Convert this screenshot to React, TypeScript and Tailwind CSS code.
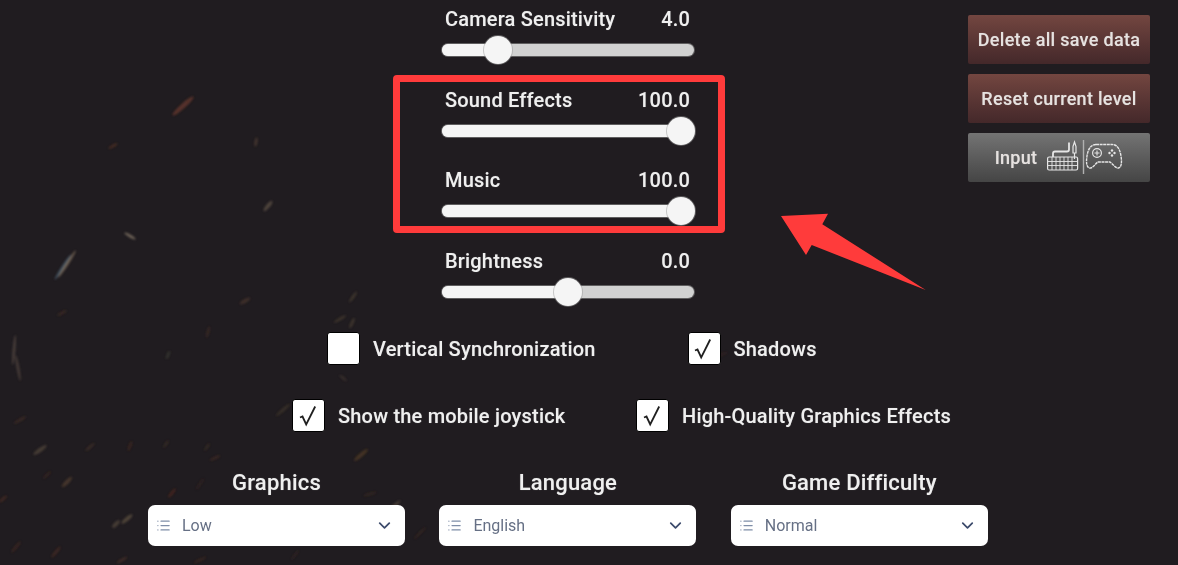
import { ChevronDown, List } from "lucide-react";

// streaks in the backdrop: x, y, length, thickness, angle, colour, opacity
const sparks: [number, number, number, number, number, string, number][] = [
  [183, 106, 28, 5, -42, "#7a4030", 0.6],
  [63, 267, 30, 3, -57, "#5a7a90", 0.55],
  [67, 264, 32, 3, -57, "#a08a70", 0.55],
  [130, 236, 13, 3, 30, "#a59580", 0.55],
  [268, 206, 13, 4, -50, "#7a6a58", 0.5],
  [256, 142, 9, 3, -80, "#6a5040", 0.45],
  [113, 146, 10, 3, -30, "#6a3a28", 0.45],
  [245, 301, 12, 4, -30, "#6a4a38", 0.4],
  [62, 313, 10, 3, -30, "#5a3a28", 0.4],
  [14, 350, 30, 3, -85, "#6a5a50", 0.5],
  [18, 368, 26, 3, 80, "#6a5a50", 0.45],
  [20, 420, 14, 3, -30, "#5a3a2a", 0.4],
  [40, 450, 16, 4, -35, "#6a5a48", 0.5],
  [90, 447, 12, 3, -40, "#5a4030", 0.4],
  [130, 446, 10, 3, -70, "#5a3020", 0.4],
  [67, 482, 14, 4, -45, "#6a5038", 0.5],
  [47, 475, 10, 3, -45, "#4a3020", 0.4],
  [127, 519, 14, 4, -40, "#7a6a50", 0.5],
  [116, 524, 10, 4, -45, "#6a5a48", 0.5],
  [56, 552, 14, 3, -50, "#6a3a28", 0.4],
  [16, 547, 14, 3, -50, "#5a3020", 0.4],
  [122, 560, 12, 3, -30, "#6a4030", 0.4],
  [3, 499, 10, 3, -40, "#6a3a28", 0.4],
  [353, 297, 13, 3, -55, "#6a5a40", 0.4],
  [340, 319, 14, 3, -30, "#6a5a40", 0.35],
  [352, 323, 11, 3, -65, "#6a5a40", 0.4],
  [208, 332, 12, 3, -75, "#5a3a2a", 0.35],
  [168, 355, 9, 3, -70, "#4a5040", 0.4],
  [343, 378, 9, 3, 40, "#5a4a3a", 0.35],
  [283, 410, 18, 3, -40, "#5a4a34", 0.4],
  [361, 455, 18, 4, -40, "#6a4a2a", 0.5],
  [166, 444, 9, 3, -55, "#4a3a2a", 0.4],
  [207, 447, 9, 3, -55, "#4a3a2a", 0.4],
  [215, 458, 11, 3, -25, "#5a3a28", 0.4],
  [172, 493, 11, 3, -50, "#6a2e20", 0.45],
  [200, 484, 14, 3, -55, "#4a3020", 0.3],
  [370, 494, 14, 3, -15, "#4a3020", 0.35],
  [395, 505, 14, 3, -40, "#7a6a50", 0.4],
  [420, 533, 16, 3, -45, "#4a3020", 0.35],
  [200, 560, 14, 3, -25, "#5a3020", 0.35],
  [295, 555, 12, 3, -55, "#4a3020", 0.3],
  [720, 355, 16, 3, -20, "#4a2c20", 0.35],
];

function Backdrop() {
  return (
    <svg className="absolute inset-0 pointer-events-none" width="1178" height="565" viewBox="0 0 1178 565">
      <defs>
        <filter id="soft" x="-50%" y="-50%" width="200%" height="200%">
          <feGaussianBlur stdDeviation="0.8" />
        </filter>
      </defs>
      <g filter="url(#soft)">
        {sparks.map(([x, y, l, t, a, c, o], i) => (
          <ellipse key={i} cx={x} cy={y} rx={l / 2} ry={t / 2} fill={c} opacity={o} transform={`rotate(${a} ${x} ${y})`} />
        ))}
      </g>
    </svg>
  );
}

function Slider({ label, value, pos }: { label: string; value: string; pos: number }) {
  return (
    <div className="w-[252px] h-[80.67px] shrink-0">
      <div className="flex justify-between pl-[3px] pr-[4px] h-[26px] text-[20px] leading-[26px] font-medium tracking-[0.18px] text-[#efefef]">
        <span>{label}</span>
        <span>{value}</span>
      </div>
      <div className="relative mt-[12px] h-[12px] rounded-full bg-[#d1d1d1] ring-1 ring-[#8a8a8a]/60">
        <div className="h-full rounded-full bg-[#f5f5f5]" style={{ width: pos }} />
        <div
          className="absolute top-[-8px] w-[28px] h-[28px] rounded-full bg-[#f5f5f5] ring-1 ring-[#9a9a9a]/50"
          style={{ left: pos - 14 }}
        />
      </div>
    </div>
  );
}

function Check({ label, checked, width }: { label: string; checked: boolean; width: number }) {
  return (
    <div className="flex items-center gap-[13px]" style={{ width }}>
      <div className="w-[33px] h-[33px] shrink-0 rounded-[3px] bg-white border border-black flex items-center justify-center">
        {checked && (
          <svg width="22" height="24" viewBox="0 0 22 24" fill="none">
            <path d="M2 13.5 L4.5 12.5 L8.2 20.5 L17.2 2.5" stroke="#1f1f1f" strokeWidth="1.8" />
          </svg>
        )}
      </div>
      <span className="text-[20px] font-medium tracking-[0.2px] text-[#efefef] whitespace-nowrap">{label}</span>
    </div>
  );
}

function Dropdown({ title, value }: { title: string; value: string }) {
  return (
    <div className="w-[257px]">
      <div className="h-[33px] text-center text-[22px] leading-[33px] font-medium tracking-[0.2px] text-[#efefef]">{title}</div>
      <div className="mt-[6px] h-[41px] rounded-[7px] bg-white flex items-center pl-[8px] pr-[11px]">
        <List size={15} strokeWidth={2} className="text-[#7f8ea8]" />
        <span className="ml-[11px] text-[16px] text-[#667085] [text-shadow:none]">{value}</span>
        <ChevronDown size={19} strokeWidth={2.2} className="ml-auto text-[#3b4a6b]" />
      </div>
    </div>
  );
}

function ActionButton({ children, grey }: { children: React.ReactNode; grey?: boolean }) {
  return (
    <div
      className={`w-[182px] h-[49px] flex items-center justify-center text-[18px] font-medium tracking-[0.3px] text-[#e6e2e0] rounded-[2px] blur-[0.5px] ${
        grey ? "bg-gradient-to-b from-[#747474] to-[#454545]" : "bg-gradient-to-b from-[#734640] to-[#44282a]"
      }`}
    >
      {children}
    </div>
  );
}

function InputIcons() {
  return (
    <svg width="76" height="36" viewBox="0 0 76 36" fill="none" stroke="#e6e6e6" strokeWidth="1.2" className="ml-[10px]">
      {/* keyboard */}
      <rect x="0.6" y="17" width="30" height="13" rx="1.5" />
      <path d="M1 21.5H30M1 25.5H30M5 17V30M9 17V30M13 17V30M17 17V30M21 17V30M25 17V30" strokeWidth="0.9" />
      <path d="M6 17V13.5Q6 11.5 8 11.5H20Q22 11.5 22 9.5V2.5" strokeWidth="1.8" />
      <path d="M26 6.5L27.5 2L29 6.5V12L29 13H26Z" />
      <path d="M27.5 13V19" />
      {/* divider */}
      <path d="M36.5 0V34" stroke="#b0b0b0" strokeWidth="1.4" />
      {/* gamepad */}
      <path
        d="M49 4.5H65C70 4.5 73 9 74 16C75 22 74.5 27.5 71.5 28C68.5 28.5 66 24 63 22H51C48 24 45.5 28.5 42.5 28C39.5 27.5 39 22 40 16C41 9 44 4.5 49 4.5Z"
        strokeWidth="1.4"
        strokeDasharray="3 0.6"
      />
      <circle cx="50" cy="13" r="4.4" />
      <path d="M50 10.5V15.5M47.5 13H52.5" strokeWidth="1.1" />
      <circle cx="65" cy="10.5" r="1.2" fill="#e6e6e6" stroke="none" />
      <circle cx="65" cy="15.5" r="1.2" fill="#e6e6e6" stroke="none" />
      <circle cx="62.5" cy="13" r="1.2" fill="#e6e6e6" stroke="none" />
      <circle cx="67.5" cy="13" r="1.2" fill="#e6e6e6" stroke="none" />
    </svg>
  );
}

export default function App() {
  return (
    <div className="relative w-[1178px] h-[565px] overflow-hidden bg-[#201c20] font-['Roboto',sans-serif]">
      <Backdrop />

      <div className="relative flex flex-col blur-[0.3px] [text-shadow:0_0_1px_rgba(255,255,255,0.35)]">
        <div className="flex h-[330px] pt-[6px]">
          <div className="ml-[442px] flex flex-col">
            <Slider label="Camera Sensitivity" value="4.0" pos={56} />
            <Slider label="Sound Effects" value="100.0" pos={239} />
            <Slider label="Music" value="100.0" pos={239} />
            <Slider label="Brightness" value="0.0" pos={126} />
          </div>
          <div className="ml-[274px] mt-[9px] flex flex-col gap-[10px]">
            <ActionButton>Delete all save data</ActionButton>
            <ActionButton>Reset current level</ActionButton>
            <ActionButton grey>
              Input
              <InputIcons />
            </ActionButton>
          </div>
        </div>

        <div className="flex ml-[327px] mt-[2px] h-[33px]">
          <Check label="Vertical Synchronization" checked={false} width={360.5} />
          <Check label="Shadows" checked width={140} />
        </div>
        <div className="flex ml-[292px] mt-[34px] h-[33px]">
          <Check label="Show the mobile joystick" checked width={344} />
          <Check label="High-Quality Graphics Effects" checked width={320} />
        </div>

        <div className="flex gap-[34.4px] ml-[148px] mt-[34px]">
          <Dropdown title="Graphics" value="Low" />
          <Dropdown title="Language" value="English" />
          <Dropdown title="Game Difficulty" value="Normal" />
        </div>
      </div>

      {/* annotation drawn on top of the screenshot */}
      <div className="absolute left-[393px] top-[75px] w-[332px] h-[158px] border-[7px] border-[#ff3b3b] rounded-[4px]" />
      <svg className="absolute left-[775px] top-[208px]" width="156" height="88" viewBox="775 208 156 88">
        <polygon points="781,216 828,213.7 822.3,224.3 925.7,290 811.7,245 806,255" fill="#ff3b3b" />
      </svg>
    </div>
  );
}
